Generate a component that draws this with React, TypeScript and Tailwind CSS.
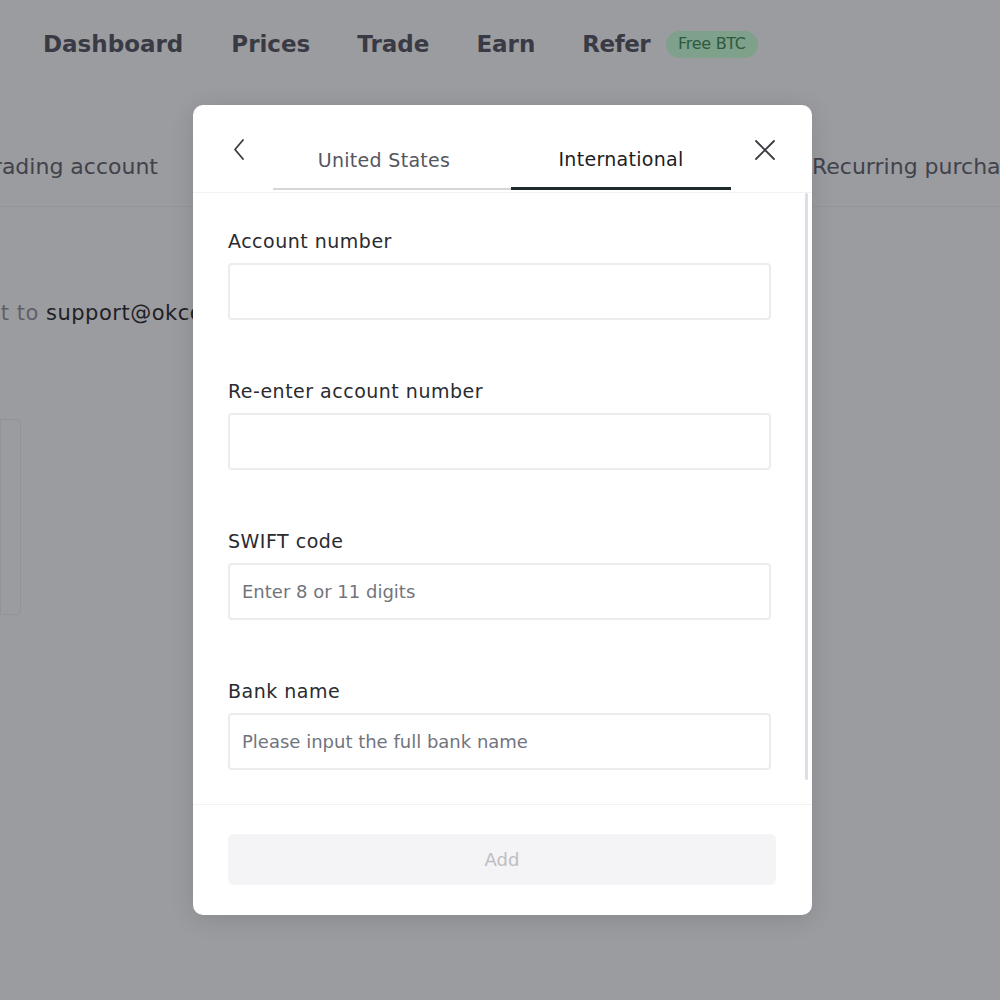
import React from "react";

const font = { fontFamily: "'DejaVu Sans', 'Noto Sans', sans-serif" };

function Field({ label, placeholder }: { label: string; placeholder?: string }) {
  return (
    <div className="mb-[59px]">
      <div className="h-[24px] text-[19px] leading-[24px] tracking-[0.5px] text-[#2a2b30]">{label}</div>
      <div className="mt-[10px] h-[57px] w-[543px] rounded-[4px] border-2 border-[#ececee] flex items-center px-[12px] text-[18px] text-[#72747d]">
        {placeholder}
      </div>
    </div>
  );
}

export default function App() {
  return (
    <div className="relative w-[1000px] h-[1000px] overflow-hidden bg-[#9b9ca0]" style={font}>
      {/* background page */}
      <div className="flex items-center h-[88px] pl-[43px] text-[23px] font-bold text-[#393a44] whitespace-nowrap">
        <span>Dashboard</span>
        <span className="ml-[48px]">Prices</span>
        <span className="ml-[47px]">Trade</span>
        <span className="ml-[47px]">Earn</span>
        <span className="ml-[47px] tracking-[-0.5px]">Refer</span>
        <span className="ml-[16px] rounded-full bg-[#7fa08b] px-[12px] h-[27px] flex items-center text-[16px] font-normal tracking-[-0.3px] text-[#2d5a3d]">Free BTC</span>
      </div>
      <div className="flex h-[119px] pt-[66px] border-b border-[#949599] text-[22px] leading-[26px] text-[#41424b] whitespace-nowrap">
        <div className="w-[158px] shrink-0 flex justify-end">
          <span className="shrink-0">Trading account</span>
        </div>
        <span className="ml-[654px] shrink-0">Recurring purchase</span>
      </div>
      <div className="flex mt-[93px] text-[21px] leading-[26px] tracking-[0.5px] whitespace-nowrap">
        <div className="w-[46px] shrink-0 flex justify-end text-[#5f6069]">
          <span className="shrink-0">Sent to&nbsp;</span>
        </div>
        <span className="shrink-0 text-[#1f2026]">support@okcoin.com</span>
      </div>
      <div className="mt-[93px] w-[21px] h-[196px] border border-[#92939a] rounded-r-[4px]" />

      {/* modal */}
      <div className="absolute left-[193px] top-[105px] w-[619px] h-[810px] bg-white rounded-[10px] shadow-[0_4px_24px_rgba(0,0,0,0.12)] flex flex-col">
        <div className="relative h-[88px] border-b border-[#f2f2f3] shrink-0">
          <svg className="absolute left-[38px] top-[33px]" width="16" height="24" viewBox="0 0 16 24" fill="none">
            <path d="M12 2 L4 11.5 L12 21" stroke="#3a3b40" strokeWidth="1.8" strokeLinecap="round" strokeLinejoin="round" />
          </svg>
          <svg className="absolute left-[560px] top-[33px]" width="24" height="24" viewBox="0 0 24 24" fill="none">
            <path d="M3 3 L21 21 M21 3 L3 21" stroke="#3a3b40" strokeWidth="1.8" strokeLinecap="round" />
          </svg>
          <div className="absolute left-[80px] bottom-[2px] flex">
            <div className="w-[238px] h-[58px] flex items-center justify-center pr-[16px] border-b-2 border-[#d6d6d9] text-[19px] tracking-[0.3px] text-[#55575f]">
              United States
            </div>
            <div className="w-[220px] h-[58px] flex items-center justify-center border-b-[3px] border-[#1f2a2a] text-[19px] tracking-[0.3px] text-[#1c1d22]">
              International
            </div>
          </div>
        </div>
        <div className="relative flex-1 pl-[35px] pt-[36px] overflow-hidden">
          <Field label="Account number" />
          <Field label="Re-enter account number" />
          <Field label="SWIFT code" placeholder="Enter 8 or 11 digits" />
          <Field label="Bank name" placeholder="Please input the full bank name" />
          <div className="absolute right-[4px] top-0 w-[3px] h-[587px] bg-[#dedfe6] rounded-full" />
        </div>
        <div className="shrink-0 h-[111px] border-t border-[#f2f2f3] px-[35px] pt-[29px]">
          <div className="w-[548px] h-[51px] rounded-[6px] bg-[#f4f4f6] flex items-center justify-center text-[18px] text-[#bdbdc2]">
            Add
          </div>
        </div>
      </div>
    </div>
  );
}
